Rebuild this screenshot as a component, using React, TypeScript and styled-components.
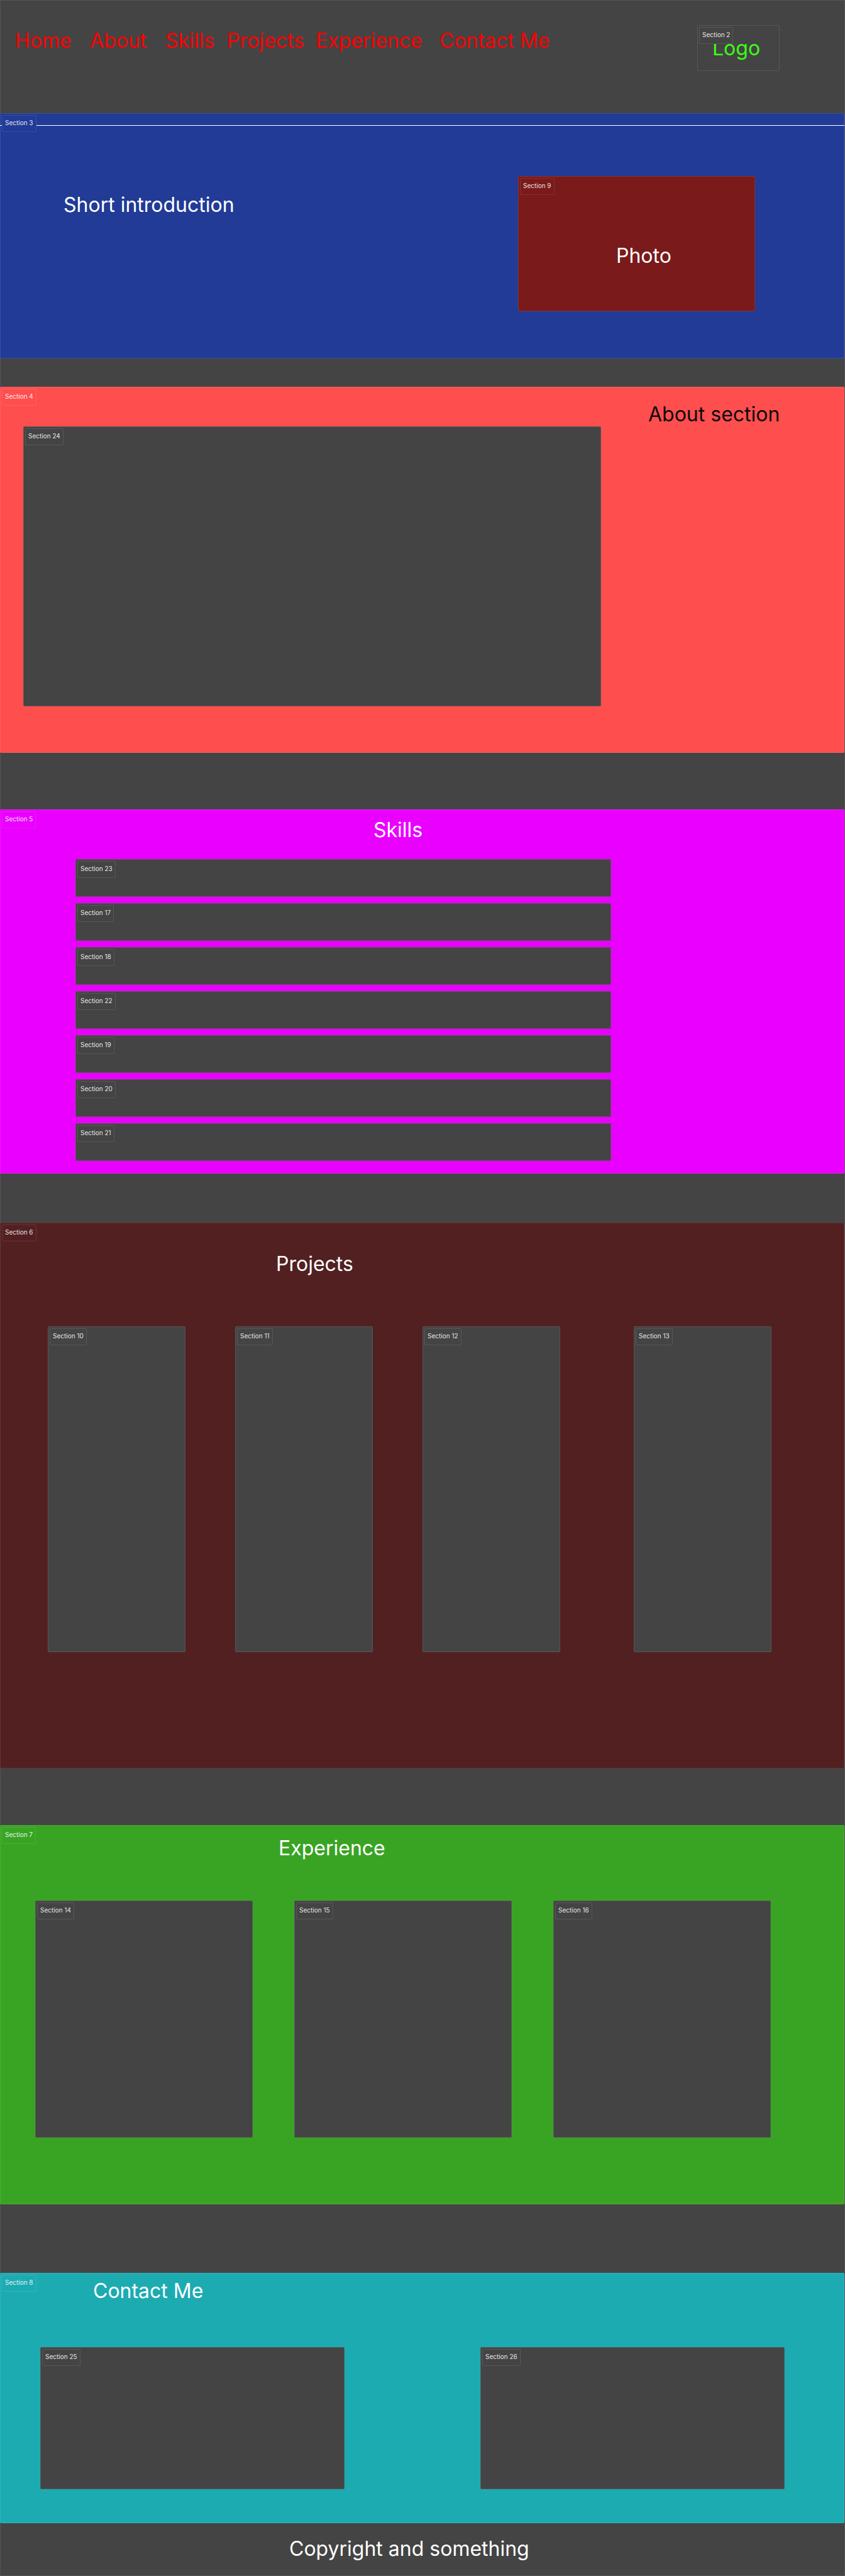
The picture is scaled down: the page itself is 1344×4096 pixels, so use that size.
import React from "react";
import styled, { createGlobalStyle } from "styled-components";

const GlobalStyle = createGlobalStyle`
  *, *::before, *::after { box-sizing: border-box; }
  body {
    margin: 0;
    background: #444444;
    color: #ffffff;
    font-family: Inter, "Liberation Sans", sans-serif;
  }
`;

const Page = styled.div`
  padding-right: 1px;
  background: #444444;
  box-shadow: inset 0 0 0 1px #555555;
`;

const Header = styled.header`
  display: flex;
  justify-content: space-between;
  align-items: flex-start;
  height: 180px;
  padding: 40px 103px 0 24px;
`;

const Nav = styled.nav`
  display: grid;
  grid-template-columns: 119px 120px 98px 141px 197px auto;
  padding-top: 4px;
`;

const NavLink = styled.a`
  color: #ff0000;
  font-size: 32px;
  line-height: 42px;
  text-decoration: none;
  white-space: nowrap;
`;

const Frame = styled.div<{ $fill?: string; $height: number }>`
  position: relative;
  height: ${(p) => p.$height}px;
  background: ${(p) => p.$fill ?? "#444444"};
  border-radius: 2px;
  box-shadow: inset 0 0 0 1px rgba(255, 255, 255, 0.1);
`;

const LogoFrame = styled(Frame)`
  width: 131px;
  padding: 16px 0 0 24px;
`;

const PhotoFrame = styled(Frame)`
  padding: 106px 0 0 156px;
`;

const Tag = styled.span`
  position: absolute;
  top: 3px;
  left: 3px;
  padding: 0 4px 2px;
  border: 1px solid rgba(255, 255, 255, 0.1);
  border-radius: 2px;
  background: inherit;
  color: rgba(255, 255, 255, 0.9);
  font-size: 10px;
  line-height: 23px;
  white-space: nowrap;
`;

const Text = styled.p<{ $color?: string }>`
  margin: 0;
  color: ${(p) => p.$color ?? "#ffffff"};
  font-size: 32px;
  line-height: 42px;
  white-space: nowrap;
`;

const Band = styled.section<{ $fill: string; $above?: number; $bottom: number }>`
  position: relative;
  margin-top: ${(p) => p.$above ?? 0}px;
  padding-bottom: ${(p) => p.$bottom}px;
  background: ${(p) => p.$fill};
  border-radius: 2px;
  box-shadow: inset 0 0 0 1px rgba(255, 255, 255, 0.1);
`;

const Title = styled.h2<{ $top: number; $left: number; $color?: string }>`
  margin: 0;
  padding: ${(p) => p.$top}px 0 0 ${(p) => p.$left}px;
  color: ${(p) => p.$color ?? "#ffffff"};
  font-size: 32px;
  font-weight: 400;
  line-height: 42px;
  white-space: nowrap;
`;

const Divider = styled.hr`
  height: 1px;
  margin: 0;
  border: 0;
  background: #ffffff;
`;

const HeroTop = styled.div`
  padding-top: 19px;
`;

const HeroRow = styled.div`
  display: grid;
  grid-template-columns: 723fr 377fr;
  padding: 80px 142px 0 101px;
`;

const Intro = styled.div`
  padding-top: 25px;
`;

const AboutRow = styled.div`
  display: grid;
  grid-template-columns: 919fr 387fr;
  padding-left: 37px;
`;

const AboutMedia = styled.div`
  padding-top: 63px;
`;

const SkillList = styled.div`
  display: grid;
  gap: 10px;
  padding: 25px 371px 0 120px;
`;

const CardRow = styled.div<{ $columns: string; $gap: number; $padding: string }>`
  display: grid;
  grid-template-columns: ${(p) => p.$columns};
  gap: ${(p) => p.$gap}px;
  padding: ${(p) => p.$padding};
`;

const Footer = styled.footer`
  padding: 20px 0 22px 460px;
`;

const links = ["Home", "About", "Skills", "Projects", "Experience", "Contact Me"];
const skills = [23, 17, 18, 22, 19, 20, 21];

const slug = (name: string) => name.toLowerCase().replace(" ", "-");

function Card({ n, height }: { n: number; height: number }) {
  return (
    <Frame $height={height}>
      <Tag>Section {n}</Tag>
    </Frame>
  );
}

export default function App() {
  return (
    <Page>
      <GlobalStyle />
      <Header>
        <Nav>
          {links.map((name) => (
            <NavLink key={name} href={`#${slug(name)}`}>
              {name}
            </NavLink>
          ))}
        </Nav>
        <LogoFrame $height={73}>
          <Text $color="#3cff14">Logo</Text>
          <Tag>Section 2</Tag>
        </LogoFrame>
      </Header>

      <main>
        <Band id="home" $fill="#213b96" $bottom={75}>
          <HeroTop>
            <Divider />
          </HeroTop>
          <Tag>Section 3</Tag>
          <HeroRow>
            <Intro>
              <Text>Short introduction</Text>
            </Intro>
            <PhotoFrame $fill="#7a1a1a" $height={215}>
              <Tag>Section 9</Tag>
              <Text>Photo</Text>
            </PhotoFrame>
          </HeroRow>
        </Band>

        <Band id="about" $fill="#ff4e4e" $above={45} $bottom={74}>
          <Tag>Section 4</Tag>
          <AboutRow>
            <AboutMedia>
              <Card n={24} height={445} />
            </AboutMedia>
            <Title $top={23} $left={75} $color="#0a0a0a">
              About section
            </Title>
          </AboutRow>
        </Band>

        <Band id="skills" $fill="#ea00ff" $above={90} $bottom={20}>
          <Tag>Section 5</Tag>
          <Title $top={12} $left={594}>
            Skills
          </Title>
          <SkillList>
            {skills.map((n) => (
              <Card key={n} n={n} height={60} />
            ))}
          </SkillList>
        </Band>

        <Band id="projects" $fill="#522021" $above={78} $bottom={185}>
          <Tag>Section 6</Tag>
          <Title $top={45} $left={439}>
            Projects
          </Title>
          <CardRow $columns="815fr 219fr" $gap={117} $padding="78px 116px 0 76px">
            <CardRow $columns="repeat(3, 1fr)" $gap={79} $padding="0">
              <Card n={10} height={518} />
              <Card n={11} height={518} />
              <Card n={12} height={518} />
            </CardRow>
            <Card n={13} height={518} />
          </CardRow>
        </Band>

        <Band id="experience" $fill="#39a423" $above={90} $bottom={106}>
          <Tag>Section 7</Tag>
          <Title $top={16} $left={443}>
            Experience
          </Title>
          <CardRow $columns="repeat(3, 1fr)" $gap={66} $padding="62px 117px 0 56px">
            <Card n={14} height={377} />
            <Card n={15} height={377} />
            <Card n={16} height={377} />
          </CardRow>
        </Band>

        <Band id="contact-me" $fill="#1dabb2" $above={109} $bottom={54}>
          <Tag>Section 8</Tag>
          <Title $top={8} $left={148}>
            Contact Me
          </Title>
          <CardRow $columns="1fr 1fr" $gap={216} $padding="68px 95px 0 64px">
            <Card n={25} height={226} />
            <Card n={26} height={226} />
          </CardRow>
        </Band>
      </main>

      <Footer>
        <Text>Copyright and something</Text>
      </Footer>
    </Page>
  );
}
